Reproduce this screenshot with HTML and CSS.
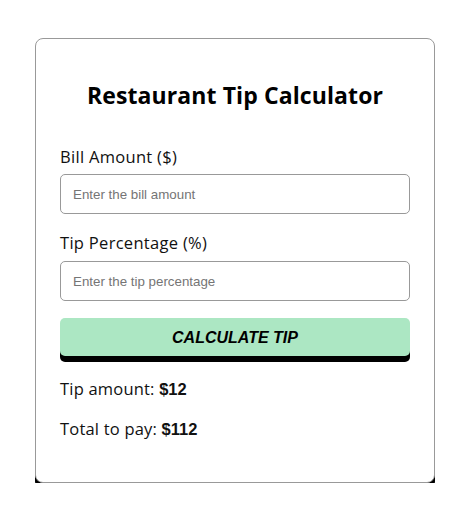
FILE: index.html
```html
<!DOCTYPE html>
<html lang="en">
<head>
<meta charset="utf-8">
<title>Restaurant Tip Calculator</title>
<link rel="stylesheet" href="styles.css">
</head>
<body>
<main class="page">
  <section class="card">
    <h1 class="title">Restaurant Tip Calculator</h1>
    <label class="label" for="bill">Bill Amount ($)</label>
    <input class="field" id="bill" type="number" placeholder="Enter the bill amount">
    <label class="label label-second" for="tip">Tip Percentage (%)</label>
    <input class="field" id="tip" type="number" placeholder="Enter the tip percentage">
    <button class="btn" type="button">CALCULATE TIP</button>
    <p class="result">Tip amount: <strong class="value">$12</strong></p>
    <p class="result">Total to pay: <strong class="value">$112</strong></p>
  </section>
</main>
</body>
</html>
```
FILE: styles.css
```css
* { box-sizing: border-box; }
html, body { margin: 0; padding: 0; background: #fff; }
body {
  font-family: "Open Sans", "DejaVu Sans", sans-serif;
  color: #111;
}
.page {
  padding: 38px 30px 0 35px;
}
.card {
  width: 400px;
  border: 1px solid #999;
  border-radius: 8px;
  box-shadow: 0 6px 0 #000;
  padding: 24px 24px 25px;
  display: flex;
  flex-direction: column;
  background: #fff;
}
.title {
  margin: 14px 0 32px;
  font-size: 23px;
  line-height: 36px;
  font-weight: 700;
  letter-spacing: 0.1px;
  text-align: center;
  color: #000;
}
.label {
  display: block;
  font-size: 16.5px;
  line-height: 24px;
  letter-spacing: 0.3px;
  margin-bottom: 5px;
}
.label-second { margin-top: 17px; margin-bottom: 6px; }
.field {
  display: block;
  width: 100%;
  height: 40px;
  border: 1px solid #999;
  border-radius: 5px;
  padding: 0 12px;
  font-family: "Liberation Sans", Arial, sans-serif;
  font-size: 13.33px;
  color: #111;
  background: #fff;
}
.field::placeholder { color: #757575; }
.btn {
  margin-top: 17px;
  margin-bottom: 5px;
  height: 38px;
  padding: 2px 0 0;
  border: none;
  border-radius: 5px;
  background: #ace7c3;
  box-shadow: 0 6px 0 #000;
  font-family: "Liberation Sans", Arial, sans-serif;
  font-size: 16px;
  font-weight: 700;
  font-style: italic;
  color: #000;
  cursor: pointer;
}
.result {
  margin: 16px 0 0;
  font-size: 16.5px;
  line-height: 24px;
  letter-spacing: 0.2px;
}
.result:last-child { margin-bottom: 16px; }
.value {
  font-family: "Liberation Sans", Arial, sans-serif;
  font-weight: 700;
  letter-spacing: 0;
}
```
